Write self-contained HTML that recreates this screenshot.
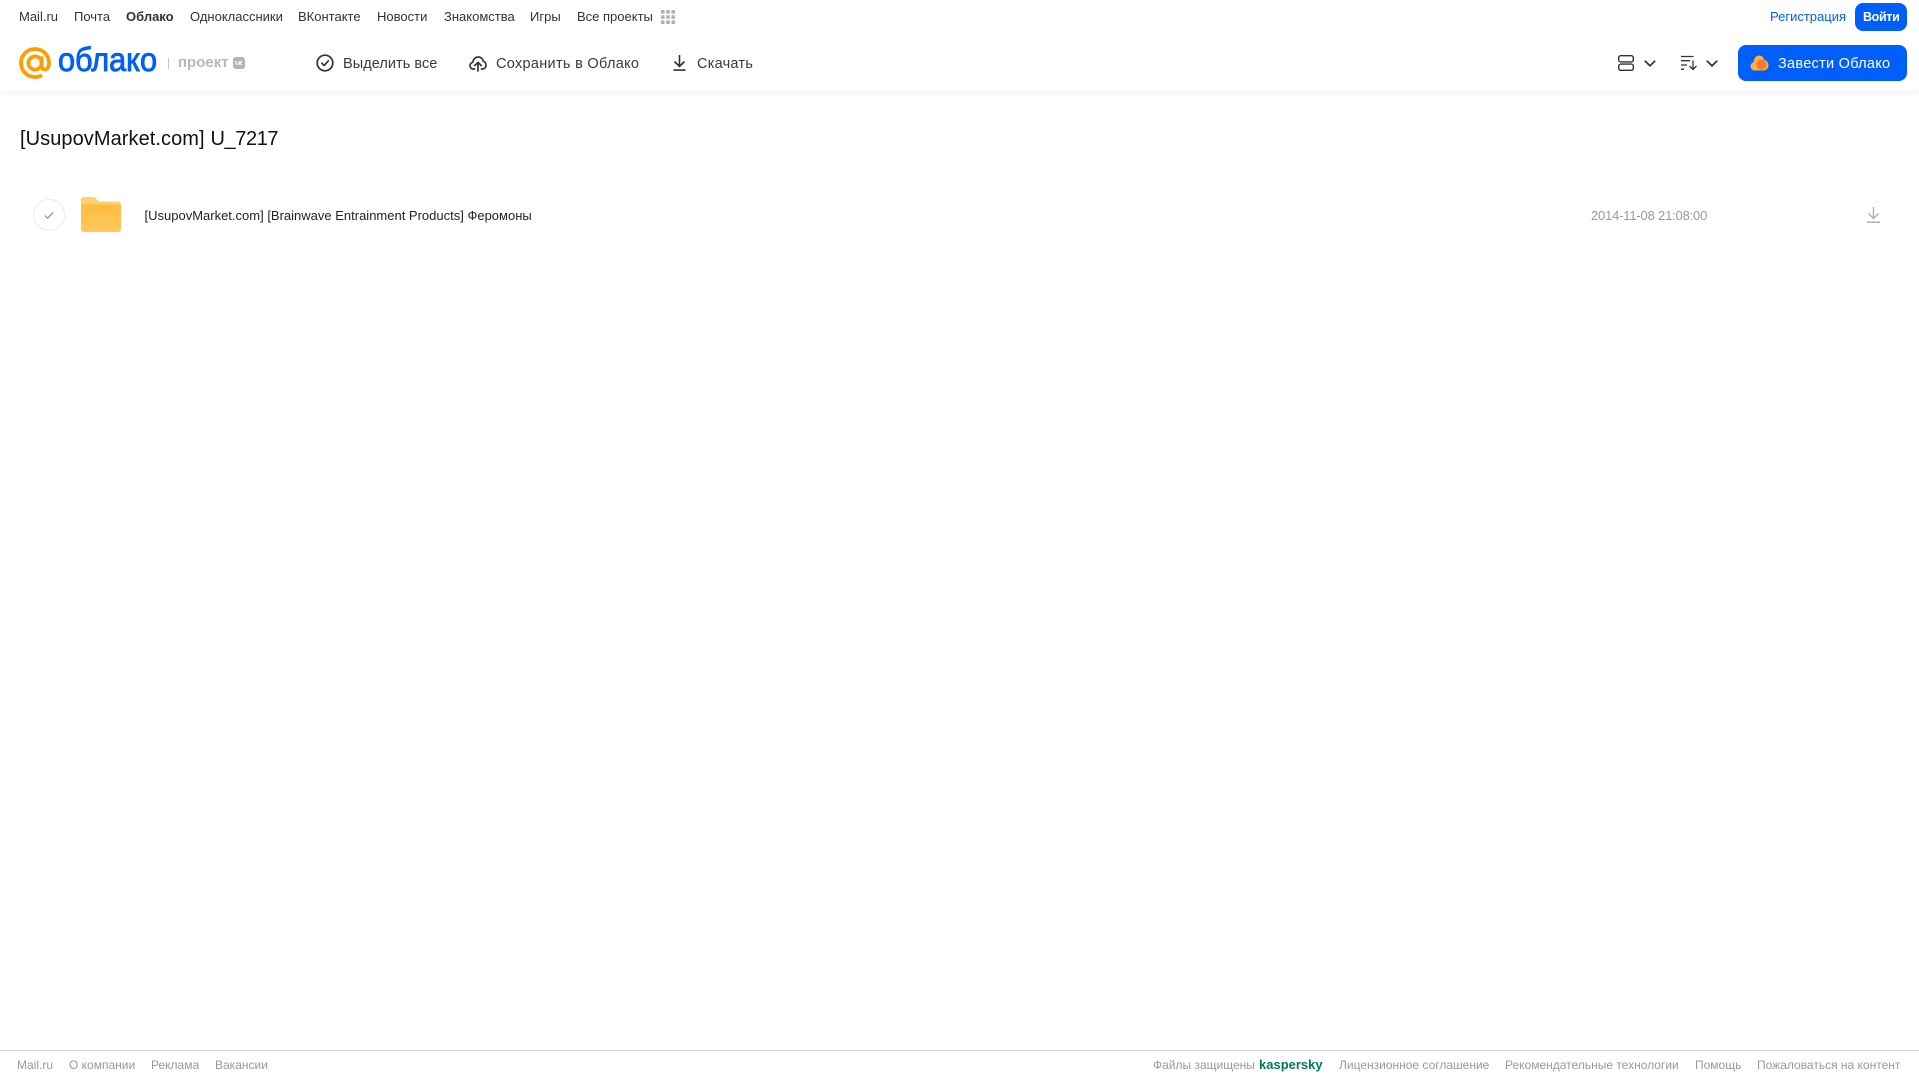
<!DOCTYPE html>
<html lang="ru">
<head>
<meta charset="utf-8">
<title>Облако</title>
<style>
html,body{margin:0;padding:0;background:#fff;width:1919px;height:1079px;overflow:hidden}
body{position:relative;font-family:"Liberation Sans",Arial,sans-serif;color:#333}
.t{position:absolute;white-space:nowrap;line-height:16px}
.n{top:9px;font-size:13px;color:#333}
.b{top:56px;font-size:14.5px;color:#3a3a3a}
.f{top:1057px;font-size:12px;color:#999}
svg{position:absolute;overflow:visible}
#hdr{position:absolute;left:0;top:0;width:1919px;height:91px;background:#fff;box-shadow:0 2px 6px rgba(0,0,0,.06)}
#btn1{position:absolute;left:1855px;top:3px;width:52px;height:28px;border-radius:8px;background:#005ff9}
#btn2{position:absolute;left:1738px;top:45px;width:169px;height:36px;border-radius:8px;background:#005ff9}
#line{position:absolute;left:0;top:1050px;width:1919px;height:1px;background:#d9d9d9}
</style>
</head>
<body>
<div id="hdr"></div>

<span class="t n" style="left:19px">Mail.ru</span>
<span class="t n" style="left:74px">Почта</span>
<span class="t n" style="left:126px;font-weight:bold">Облако</span>
<span class="t n" style="left:190px">Одноклассники</span>
<span class="t n" style="left:298px">ВКонтакте</span>
<span class="t n" style="left:377px">Новости</span>
<span class="t n" style="left:444px">Знакомства</span>
<span class="t n" style="left:530px">Игры</span>
<span class="t n" style="left:577px">Все проекты</span>
<svg style="left:661px;top:10px" width="14" height="14" viewBox="0 0 14 14" fill="#b0b0b0">
<rect x="0" y="0" width="3.6" height="3.6" rx=".8"/><rect x="5.2" y="0" width="3.6" height="3.6" rx=".8"/><rect x="10.4" y="0" width="3.6" height="3.6" rx=".8"/>
<rect x="0" y="5.2" width="3.6" height="3.6" rx=".8"/><rect x="5.2" y="5.2" width="3.6" height="3.6" rx=".8"/><rect x="10.4" y="5.2" width="3.6" height="3.6" rx=".8"/>
<rect x="0" y="10.4" width="3.6" height="3.6" rx=".8"/><rect x="5.2" y="10.4" width="3.6" height="3.6" rx=".8"/><rect x="10.4" y="10.4" width="3.6" height="3.6" rx=".8"/>
</svg>

<span class="t n" style="left:1770px;color:#005ff9">Регистрация</span>
<div id="btn1"></div>
<span class="t n" style="left:1863px;color:#fff;font-weight:bold;font-size:12.5px;letter-spacing:-.35px">Войти</span>

<!-- logo -->
<svg style="left:19px;top:47px" width="32" height="32" viewBox="0 0 32 32" fill="none" stroke="#ff9e00" stroke-width="3.8">
<circle cx="16" cy="16" r="6.6"/>
<path d="M22.600 9.400V18.500c0 2.600 1.500 4 3.300 4 2.400 0 4.100-2.600 4.100-6.500C30 8 23.800 2 16 2S2 8.200 2 16s6.200 14 14 14c2.800 0 5-.6 7-1.800"/>
</svg>
<svg style="left:0;top:0" width="400" height="91">
<text x="58" y="71" font-family="'Liberation Sans',sans-serif" font-size="33" fill="#005ff9" stroke="#005ff9" stroke-width=".9" textLength="99" lengthAdjust="spacingAndGlyphs">облако</text>
</svg>
<div style="position:absolute;left:168px;top:58px;width:1px;height:11px;background:#c4c4c4"></div>
<span class="t" style="left:178px;top:55px;font-size:15px;font-weight:bold;color:#b8b8b8">проект</span>
<div style="position:absolute;left:233px;top:57px;width:12px;height:12px;border-radius:3px;background:#b3b3b3"></div>
<svg style="left:233px;top:57px" width="12" height="12" viewBox="0 0 12 12" fill="none" stroke="#fff" stroke-width="1.200"><path d="M2.500 4l1.200 4M6 4v4M9.300 4L6.500 6l2.800 2"/></svg>

<!-- toolbar -->
<svg style="left:316px;top:54px" width="18" height="18" viewBox="0 0 18 18" fill="none" stroke="#333" stroke-width="1.700">
<circle cx="9" cy="9" r="7.800"/><path d="M5.800 9.200l2.300 2.300 4.200-4.600" stroke-linecap="round" stroke-linejoin="round"/>
</svg>
<span class="t b" style="left:343px;letter-spacing:.05px">Выделить все</span>

<svg style="left:469px;top:54px" width="18" height="18" viewBox="0 0 18 18" fill="none" stroke="#333" stroke-width="1.700" stroke-linecap="round" stroke-linejoin="round">
<path d="M5.500 15H4.500C2.300 15 1 13.400 1 11.600c0-1.700 1.200-3 2.800-3.300C4.300 5.200 6.500 3 9.300 3c2.600 0 4.700 1.900 5 4.300 1.600.4 2.700 2 2.700 3.800 0 2.200-1.500 3.900-3.700 3.900h-.8"/>
<path d="M9 17V8.500M5.800 11.500L9 8.300l3.200 3.200"/>
</svg>
<span class="t b" style="left:496px;letter-spacing:.3px">Сохранить в Облако</span>

<svg style="left:673px;top:55px" width="13" height="16" viewBox="0 0 13 16" fill="none" stroke="#333" stroke-width="1.600">
<path d="M6.500 0v11M1.500 6.500l5 5 5-5M.500 15.100h12"/>
</svg>
<span class="t b" style="left:697px;letter-spacing:.25px">Скачать</span>

<!-- right controls -->
<svg style="left:1618px;top:55px" width="16" height="16" viewBox="0 0 16 16" fill="none" stroke="#333" stroke-width="1.400">
<rect x=".7" y=".7" width="14.600" height="6.200" rx="2"/><rect x=".7" y="9.100" width="14.600" height="6.200" rx="2"/>
</svg>
<svg style="left:1644px;top:60px" width="12" height="7" viewBox="0 0 12 7" fill="none" stroke="#333" stroke-width="1.700"><path d="M.8.800L6 5.800 11.200.8"/></svg>
<svg style="left:1681px;top:55px" width="16" height="16" viewBox="0 0 16 16" fill="none" stroke="#333" stroke-width="1.300">
<path d="M0 1.500h12.500M0 5.700h9M0 10h6M0 14.300h3M12 5.500v9M8.500 11l3.500 3.500 3.500-3.500"/>
</svg>
<svg style="left:1706px;top:60px" width="12" height="7" viewBox="0 0 12 7" fill="none" stroke="#333" stroke-width="1.700"><path d="M.8.800L6 5.800 11.200.8"/></svg>

<div id="btn2"></div>
<svg style="left:1750px;top:54px" width="19" height="18" viewBox="0 0 19 18">
<path d="M5 16.500C2.200 16.500.5 14.500.5 12.200c0-2 1.200-3.500 3-4C4 4 6.200 1.500 9 1.500c2.600 0 4.700 1.900 5.300 4.500 2.400.2 4.200 2.400 4.200 5.100 0 3-2.100 5.400-5 5.400z" fill="#ffb03a"/>
<circle cx="11.500" cy="10.500" r="5.200" fill="#ff7a30"/>
</svg>
<span class="t b" style="left:1778px;color:#fff;letter-spacing:.28px">Завести Облако</span>

<!-- content -->
<span class="t" style="left:20px;top:128px;font-size:20px;line-height:23px;color:#111;letter-spacing:.07px">[UsupovMarket.com]</span>
<span class="t" style="left:210.500px;top:128px;font-size:20px;line-height:23px;color:#111;letter-spacing:-.4px">U_7217</span>

<svg style="left:33px;top:199px" width="32" height="32" viewBox="0 0 32 32" fill="none">
<circle cx="16" cy="16" r="15.500" stroke="#ececec"/>
<path d="M11.800 16.500l2.900 2.700 5.500-5.800" stroke="#999" stroke-width="1.400"/>
</svg>
<svg style="left:81px;top:197px" width="40" height="35" viewBox="0 0 40 35">
<defs><linearGradient id="g" x1="0" y1="0" x2="0" y2="1"><stop offset="0" stop-color="#ffbc3f"/><stop offset="1" stop-color="#ffc95e"/></linearGradient></defs>
<path d="M0 3C0 1.300 1.300 0 3 0h9c1.500 0 2.500.8 3.500 2.200L18 4.500h19c1.700 0 3 1.300 3 3V32c0 1.700-1.300 3-3 3H3c-1.700 0-3-1.300-3-3z" fill="#ffcf70"/>
<path d="M0 7.500h37c1.700 0 3 1.300 3 3V32c0 1.700-1.300 3-3 3H3c-1.700 0-3-1.300-3-3z" fill="url(#g)"/>
</svg>
<span class="t" style="left:144.500px;top:208px;font-size:13px;color:#222">[UsupovMarket.com] [Brainwave Entrainment Products] Феромоны</span>
<span class="t" style="left:1591px;top:208px;font-size:13px;color:#999;letter-spacing:-.19px">2014-11-08 21:08:00</span>
<svg style="left:1867px;top:207px" width="13" height="16" viewBox="0 0 13 16" fill="none" stroke="#aaa" stroke-width="1.300">
<path d="M6.500 0v11M1.500 6.500l5 5 5-5M0 15.200h13"/>
</svg>

<!-- footer -->
<div id="line"></div>
<span class="t f" style="left:17px">Mail.ru</span>
<span class="t f" style="left:69px">О компании</span>
<span class="t f" style="left:151px">Реклама</span>
<span class="t f" style="left:215px">Вакансии</span>
<span class="t f" style="left:1153px">Файлы защищены</span>
<span class="t f" style="left:1259px;font-size:13px;font-weight:bold;color:#00795f">kaspersky</span>
<span class="t f" style="left:1339px">Лицензионное соглашение</span>
<span class="t f" style="left:1505px">Рекомендательные технологии</span>
<span class="t f" style="left:1695px">Помощь</span>
<span class="t f" style="left:1757px">Пожаловаться на контент</span>
</body>
</html>
